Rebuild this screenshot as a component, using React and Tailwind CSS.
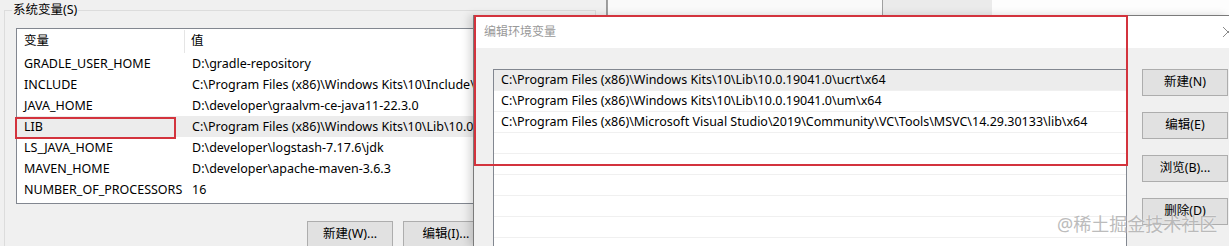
const font = "font-['Noto_Sans','Noto_Sans_CJK_SC',sans-serif]";

const leftRows = [
  ["GRADLE_USER_HOME", "D:\\gradle-repository"],
  ["INCLUDE", "C:\\Program Files (x86)\\Windows Kits\\10\\Include\\10.0.19041.0\\ucrt"],
  ["JAVA_HOME", "D:\\developer\\graalvm-ce-java11-22.3.0"],
  ["LIB", "C:\\Program Files (x86)\\Windows Kits\\10\\Lib\\10.0.19041.0\\ucrt\\x64"],
  ["LS_JAVA_HOME", "D:\\developer\\logstash-7.17.6\\jdk"],
  ["MAVEN_HOME", "D:\\developer\\apache-maven-3.6.3"],
  ["NUMBER_OF_PROCESSORS", "16"],
];

const paths = [
  "C:\\Program Files (x86)\\Windows Kits\\10\\Lib\\10.0.19041.0\\ucrt\\x64",
  "C:\\Program Files (x86)\\Windows Kits\\10\\Lib\\10.0.19041.0\\um\\x64",
  "C:\\Program Files (x86)\\Microsoft Visual Studio\\2019\\Community\\VC\\Tools\\MSVC\\14.29.30133\\lib\\x64",
  "",
  "",
  "",
  "",
  "",
];

const dialogButtons = ["新建(N)", "编辑(E)", "浏览(B)...", "删除(D)"];

function WinButton({ label, className = "" }) {
  return (
    <div
      className={`flex items-center justify-center h-[27px] w-[86px] shrink-0 bg-[#e1e1e1] border border-[#adadad] text-[12.5px] text-black ${className}`}
    >
      {label}
    </div>
  );
}

export default function App() {
  return (
    <div className={`relative w-[1229px] h-[246px] overflow-hidden bg-white ${font}`}>
      {/* other windows peeking at the top */}
      <div className="absolute top-0 left-[607px] right-0 h-[15px] flex">
        <div className="w-[275px] bg-[#fafafa] border-l border-[#a0a0a0]" />
        <div className="w-[110px] bg-[#ebebeb] border-l border-[#a0a0a0]" />
        <div className="flex-1 bg-[#fdfdfd]" />
      </div>

      {/* system variables window */}
      <div className="absolute top-0 left-0 w-[607px] h-[246px] bg-[#f0f0f0] border-r border-[#9a9a9a]">
        <div className="relative ml-[4px] mt-[10px] w-[592px] h-[260px] border border-[#dcdcdc]">
          <span className="absolute -top-[10px] left-[7px] px-[1px] bg-[#f0f0f0] text-[12.5px] leading-[18px] text-black">
            系统变量(S)
          </span>
          <div className="ml-[11px] mt-[17px] w-[570px] h-[176px] overflow-hidden bg-white border border-[#828790] text-[12.5px] text-black">
            <div className="flex h-[24px] items-center">
              <div className="w-[168px] shrink-0 pl-[7px] border-r border-[#e5e5e5] h-[23px] flex items-center">变量</div>
              <div className="pl-[6px]">值</div>
            </div>
            {leftRows.map(([name, value]) => (
              <div
                key={name}
                className={`flex h-[21px] items-center whitespace-nowrap pt-[1px] ${name === "LIB" ? "bg-[#ececec]" : ""}`}
              >
                <div className="w-[168px] shrink-0 pl-[7px]">{name}</div>
                <div className="pl-[7px]">{value}</div>
              </div>
            ))}
          </div>
          <div className="flex gap-[10px] ml-[302px] mt-[17px]">
            <WinButton label="新建(W)..." />
            <WinButton label="编辑(I)..." />
          </div>
        </div>
      </div>

      {/* edit environment variable dialog */}
      <div className="absolute top-[15px] left-[473px] right-0 bottom-0 flex flex-col border-l border-t border-[#7a7a7a] shadow-[-4px_0_8px_rgba(0,0,0,0.15)]">
        <div className="flex h-[32px] shrink-0 items-center justify-between bg-white pl-[10px]">
          <span className="text-[12px] text-[#999999]">编辑环境变量</span>
          <svg width="12" height="12" viewBox="0 0 12 12" className="mr-[-5px]">
            <path d="M1 1L11 11M11 1L1 11" stroke="#8a8a8a" strokeWidth="1" />
          </svg>
        </div>
        <div className="flex flex-1 min-h-0 bg-[#f0f0f0] pl-[19px] pt-[21px]">
          <div className="w-[634px] h-[200px] shrink-0 overflow-hidden bg-white border-l border-t border-r border-[#828790] text-[12.5px] text-black">
            {paths.map((p, i) => (
              <div
                key={i}
                className={`h-[21px] flex items-center pl-[7px] whitespace-nowrap border-b border-[#f0f0f0] ${i === 0 ? "bg-[#ececec]" : ""}`}
              >
                {p}
              </div>
            ))}
          </div>
          <div className="flex flex-col gap-[16px] ml-[15px]">
            {dialogButtons.map((b) => (
              <WinButton key={b} label={b} />
            ))}
          </div>
        </div>
      </div>

      {/* red highlight boxes */}
      <div className="absolute left-[474px] top-[15px] w-[654px] h-[151px] border-2 border-[#d3333d]" />
      <div className="absolute left-[15px] top-[117px] w-[161px] h-[22px] border-2 border-[#d3333d]" />

      {/* watermark */}
      <div className="absolute left-[1057px] top-[212px] text-[18px] leading-[24px] text-[#b5b5b5] opacity-90 [text-shadow:0_0_2px_#ffffff]">
        @稀土掘金技术社区
      </div>
    </div>
  );
}
